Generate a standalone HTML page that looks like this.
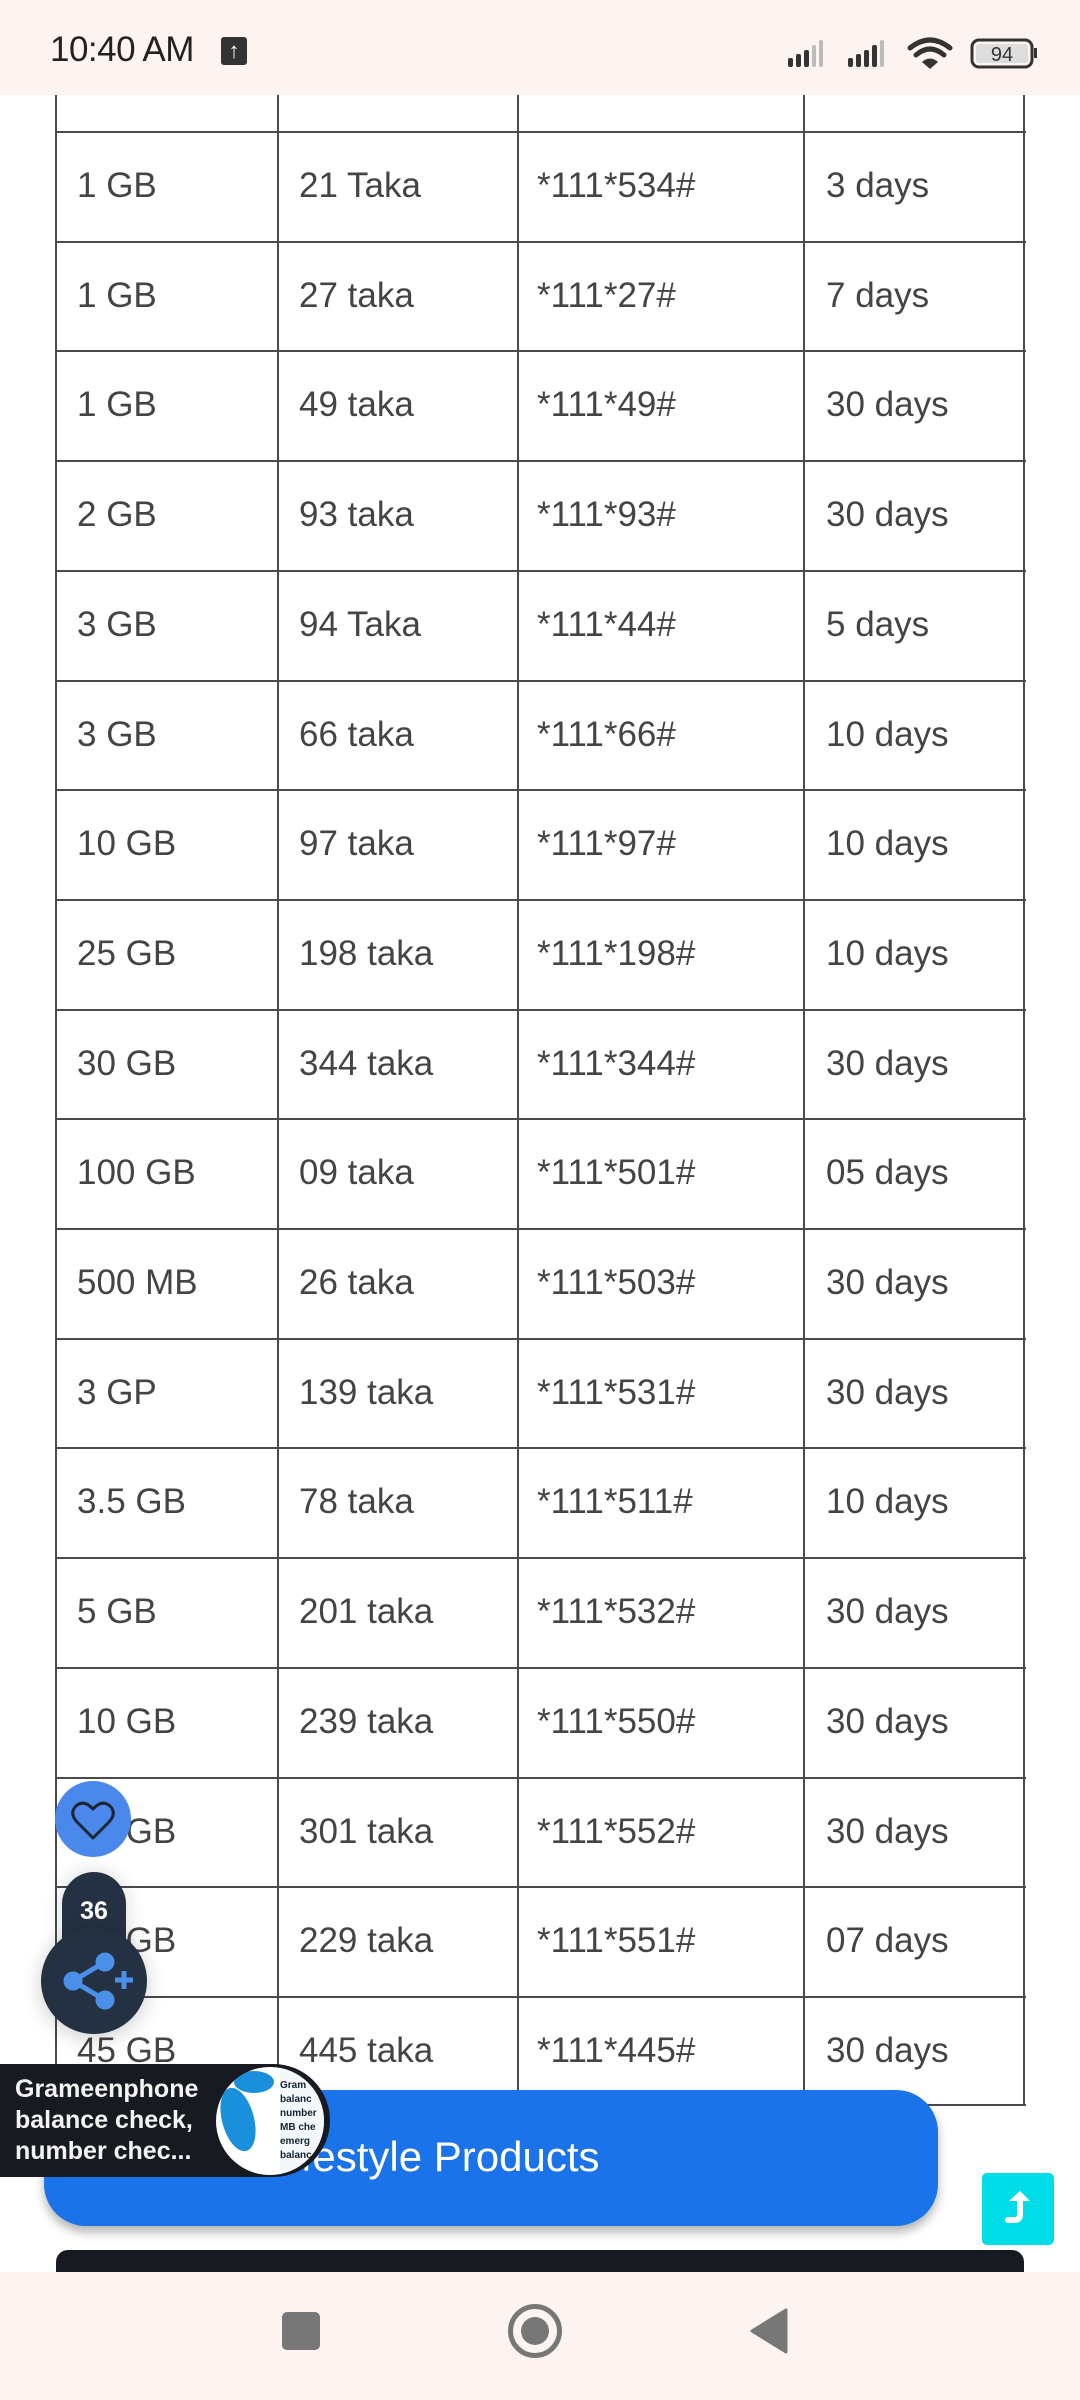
<!DOCTYPE html>
<html><head><meta charset="utf-8"><style>
*{margin:0;padding:0;box-sizing:border-box}
html,body{width:1080px;height:2400px;overflow:hidden;background:#fff;font-family:"Liberation Sans",sans-serif}
.sb{position:absolute;left:0;top:0;width:1080px;height:95px;background:#fdf4f2}
.time{position:absolute;left:50px;top:30px;font-size:35px;color:#222;letter-spacing:-0.5px}
.row{position:absolute;left:56px;width:970px;height:110px;border-top:2px solid #4a4a4a}
.row span{position:absolute;top:0;line-height:106px;font-size:35px;color:#444}
.c1{left:21px}.c2{left:243px}.c3{left:481px}.c4{left:770px}
.vl{position:absolute;top:95px;height:2011px;width:2px;background:#4a4a4a}
</style></head><body>
<div class="vl" style="left:55px"></div>
<div class="vl" style="left:277px"></div>
<div class="vl" style="left:517px"></div>
<div class="vl" style="left:803px"></div>
<div class="vl" style="left:1023px"></div>

<div class="row" style="top:131px"><span class="c1">1 GB</span><span class="c2">21 Taka</span><span class="c3">*111*534#</span><span class="c4">3 days</span></div>
<div class="row" style="top:241px"><span class="c1">1 GB</span><span class="c2">27 taka</span><span class="c3">*111*27#</span><span class="c4">7 days</span></div>
<div class="row" style="top:350px"><span class="c1">1 GB</span><span class="c2">49 taka</span><span class="c3">*111*49#</span><span class="c4">30 days</span></div>
<div class="row" style="top:460px"><span class="c1">2 GB</span><span class="c2">93 taka</span><span class="c3">*111*93#</span><span class="c4">30 days</span></div>
<div class="row" style="top:570px"><span class="c1">3 GB</span><span class="c2">94 Taka</span><span class="c3">*111*44#</span><span class="c4">5 days</span></div>
<div class="row" style="top:680px"><span class="c1">3 GB</span><span class="c2">66 taka</span><span class="c3">*111*66#</span><span class="c4">10 days</span></div>
<div class="row" style="top:789px"><span class="c1">10 GB</span><span class="c2">97 taka</span><span class="c3">*111*97#</span><span class="c4">10 days</span></div>
<div class="row" style="top:899px"><span class="c1">25 GB</span><span class="c2">198 taka</span><span class="c3">*111*198#</span><span class="c4">10 days</span></div>
<div class="row" style="top:1009px"><span class="c1">30 GB</span><span class="c2">344 taka</span><span class="c3">*111*344#</span><span class="c4">30 days</span></div>
<div class="row" style="top:1118px"><span class="c1">100 GB</span><span class="c2">09 taka</span><span class="c3">*111*501#</span><span class="c4">05 days</span></div>
<div class="row" style="top:1228px"><span class="c1">500 MB</span><span class="c2">26 taka</span><span class="c3">*111*503#</span><span class="c4">30 days</span></div>
<div class="row" style="top:1338px"><span class="c1">3 GP</span><span class="c2">139 taka</span><span class="c3">*111*531#</span><span class="c4">30 days</span></div>
<div class="row" style="top:1447px"><span class="c1">3.5 GB</span><span class="c2">78 taka</span><span class="c3">*111*511#</span><span class="c4">10 days</span></div>
<div class="row" style="top:1557px"><span class="c1">5 GB</span><span class="c2">201 taka</span><span class="c3">*111*532#</span><span class="c4">30 days</span></div>
<div class="row" style="top:1667px"><span class="c1">10 GB</span><span class="c2">239 taka</span><span class="c3">*111*550#</span><span class="c4">30 days</span></div>
<div class="row" style="top:1777px"><span class="c1">20 GB</span><span class="c2">301 taka</span><span class="c3">*111*552#</span><span class="c4">30 days</span></div>
<div class="row" style="top:1886px"><span class="c1">40 GB</span><span class="c2">229 taka</span><span class="c3">*111*551#</span><span class="c4">07 days</span></div>
<div class="row" style="top:1996px;border-bottom:2px solid #4a4a4a"><span class="c1">45 GB</span><span class="c2">445 taka</span><span class="c3">*111*445#</span><span class="c4">30 days</span></div>

<!-- blue button -->
<div style="position:absolute;left:44px;top:2090px;width:894px;height:136px;background:#1a73e8;border-radius:42px;box-shadow:0 6px 10px rgba(0,0,0,.3)"></div>
<div style="position:absolute;left:268px;top:2133px;font-size:42px;color:#fff">Lifestyle Products</div>

<!-- dark bar -->
<div style="position:absolute;left:56px;top:2250px;width:968px;height:40px;background:#171a20;border-radius:12px 12px 0 0"></div>

<!-- scroll top -->
<div style="position:absolute;left:982px;top:2173px;width:72px;height:72px;background:#00dce8;border-radius:5px"></div>
<svg style="position:absolute;left:982px;top:2173px" width="72" height="72" viewBox="0 0 72 72"><path d="M26 47 H33 Q38 47 38 41 V26" stroke="#fff" stroke-width="6" fill="none" stroke-linecap="round"/><path d="M27 28 L38 18 L48 28 Z" fill="#fff"/></svg>

<!-- floating heart -->
<div style="position:absolute;left:55px;top:1781px;width:76px;height:76px;border-radius:50%;background:#4a88ec"></div>
<svg style="position:absolute;left:55px;top:1781px" width="76" height="76" viewBox="0 0 76 76"><path d="M38 57 L22 41 Q14 32 21 25 Q29 18 38 28 Q47 18 55 25 Q62 32 54 41 Z" fill="none" stroke="#1c2633" stroke-width="3" stroke-linejoin="round"/></svg>
<div style="position:absolute;left:62px;top:1872px;width:64px;height:110px;border-radius:32px;background:#243142;box-shadow:0 0 20px rgba(0,0,0,.15)"></div>
<div style="position:absolute;left:62px;top:1897px;width:64px;text-align:center;font-size:25px;font-weight:bold;color:#fff">36</div>
<div style="position:absolute;left:41px;top:1928px;width:106px;height:106px;border-radius:50%;background:#243142;box-shadow:0 4px 20px rgba(0,0,0,.2)"></div>
<svg style="position:absolute;left:41px;top:1928px" width="106" height="106" viewBox="0 0 106 106"><g stroke="#4a90e8" stroke-width="5" fill="#4a90e8"><line x1="32" y1="53" x2="64" y2="34"/><line x1="32" y1="53" x2="64" y2="72"/><circle cx="32" cy="53" r="7"/><circle cx="64" cy="34" r="7"/><circle cx="64" cy="72" r="7"/><line x1="74" y1="52" x2="92" y2="52"/><line x1="83" y1="43" x2="83" y2="61"/></g></svg>

<!-- popup -->
<div style="position:absolute;left:0;top:2064px;width:330px;height:113px;background:#171a20;border-radius:0 57px 57px 0"></div>
<div style="position:absolute;left:15px;top:2074px;font-size:25px;line-height:31px;font-weight:bold;color:#f4f4f4">Grameenphone<br>balance check,<br>number chec...</div>
<div style="position:absolute;left:216px;top:2067px;width:108px;height:108px;border-radius:50%;background:#fff;overflow:hidden">
<div style="position:absolute;left:6px;top:20px;width:32px;height:65px;border-radius:50%;background:#1a8fdc;transform:rotate(-15deg)"></div>
<div style="position:absolute;left:18px;top:4px;width:40px;height:22px;border-radius:50%;background:#1a8fdc"></div>
<div style="position:absolute;left:64px;top:0;width:44px;height:108px;background:#f4f8fb;font-size:10px;line-height:14px;color:#123;font-weight:bold;padding-top:12px">Gram<br>balanc<br>number<br>MB che<br>emerg<br>balanc</div>
</div>

<!-- status bar -->
<div class="sb"></div>
<div class="time">10:40 AM</div>
<div style="position:absolute;left:221px;top:37px;width:26px;height:28px;background:#333;border-radius:3px;color:#fff;font-size:22px;text-align:center;line-height:28px;font-weight:bold">↑</div>
<svg style="position:absolute;left:760px;top:30px" width="290" height="45" viewBox="0 0 290 45">
<g fill="#333"><rect x="28" y="28" width="5" height="9" rx="2"/><rect x="36" y="24" width="5" height="13" rx="2"/><rect x="44" y="20" width="5" height="17" rx="2"/></g>
<g fill="#bbb"><rect x="52" y="15" width="4" height="22" rx="2"/><rect x="59" y="10" width="4" height="27" rx="2"/></g>
<g fill="#333"><rect x="88" y="28" width="5" height="9" rx="2"/><rect x="96" y="24" width="5" height="13" rx="2"/><rect x="104" y="20" width="5" height="17" rx="2"/><rect x="112" y="15" width="5" height="22" rx="2"/></g>
<rect x="120" y="10" width="4" height="27" rx="2" fill="#bbb"/>
<path d="M150 18 Q170 2 190 18" stroke="#333" stroke-width="5" fill="none" stroke-linecap="round"/>
<path d="M156 25 Q170 13 184 25" stroke="#333" stroke-width="5" fill="none" stroke-linecap="round"/>
<path d="M162 32 Q170 25 178 32 L170 39 Z" fill="#333"/>
<rect x="212" y="10" width="60" height="27" rx="7" fill="none" stroke="#333" stroke-width="3"/>
<rect x="216" y="14" width="52" height="19" rx="3" fill="#ddd"/>
<rect x="274" y="18" width="3" height="10" fill="#333"/>
<text x="242" y="31" font-size="20" text-anchor="middle" fill="#333" font-family="Liberation Sans">94</text>
</svg>

<!-- nav bar -->
<div style="position:absolute;left:0;top:2272px;width:1080px;height:128px;background:#fdf4f2"></div>
<div style="position:absolute;left:282px;top:2312px;width:38px;height:38px;background:#777;border-radius:5px"></div>
<div style="position:absolute;left:508px;top:2304px;width:54px;height:54px;border-radius:50%;border:5px solid #777"></div>
<div style="position:absolute;left:521px;top:2317px;width:28px;height:28px;border-radius:50%;background:#777"></div>
<svg style="position:absolute;left:748px;top:2308px" width="40" height="46"><path d="M38 2 V44 L4 23 Z" fill="#777" stroke="#777" stroke-width="3" stroke-linejoin="round"/></svg>
</body></html>
